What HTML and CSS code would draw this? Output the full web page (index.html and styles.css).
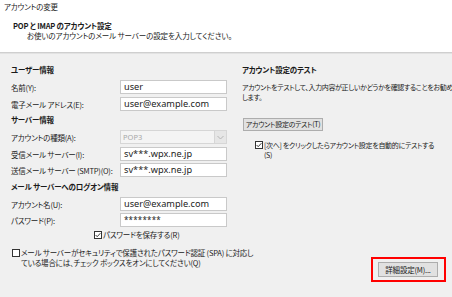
FILE: index.html
```html
<!DOCTYPE html>
<html lang="ja">
<head>
<meta charset="utf-8">
<title>アカウントの変更</title>
<link rel="stylesheet" href="styles.css">
</head>
<body>
<div class="dialog">
  <header class="header">
    <div class="win-title">アカウントの変更</div>
    <div class="head-title">POP と IMAP のアカウント設定</div>
    <div class="head-sub">お使いのアカウントのメール サーバーの設定を入力してください。</div>
  </header>
  <main class="main">
    <section class="left">
      <div class="sec-title first">ユーザー情報</div>
      <div class="row gap4"><span class="label">名前(Y):</span><span class="field">user</span></div>
      <div class="row gap3"><span class="label">電子メール アドレス(E):</span><span class="field">user@example.com</span></div>
      <div class="sec-title gap3">サーバー情報</div>
      <div class="row gap4"><span class="label">アカウントの種類(A):</span>
        <span class="select"><span class="select-val">POP3</span><span class="select-btn"><svg width="7" height="5" viewBox="0 0 7 5"><path d="M0.5 1 L3.5 4 L6.5 1" fill="none" stroke="#b5b5b5" stroke-width="1"/></svg></span></span></div>
      <div class="row gap3"><span class="label">受信メール サーバー(I):</span><span class="field">sv***.wpx.ne.jp</span></div>
      <div class="row gap2"><span class="label">送信メール サーバー (SMTP)(O):</span><span class="field">sv***.wpx.ne.jp</span></div>
      <div class="sec-title gap4">メール サーバーへのログオン情報</div>
      <div class="row gap4"><span class="label">アカウント名(U):</span><span class="field">user@example.com</span></div>
      <div class="row gap2"><span class="label">パスワード(P):</span><span class="field pw">********</span></div>
      <div class="check-row save"><span class="cb"><svg width="8" height="8" viewBox="0 0 8 8"><rect x="0.5" y="0.5" width="7" height="7" fill="#fff" stroke="#333"/><path d="M1.6 4 L3.2 5.7 L6.4 2.2" fill="none" stroke="#222" stroke-width="0.9"/></svg></span><span>パスワードを保存する(R)</span></div>
      <div class="check-row spa"><span class="cb"><svg width="8" height="8" viewBox="0 0 8 8"><rect x="0.5" y="0.5" width="7" height="7" fill="#fff" stroke="#333"/></svg></span><span class="spa-text">メール サーバーがセキュリティで保護されたパスワード認証 (SPA) に対応し<br>ている場合には、チェック ボックスをオンにしてください(Q)</span></div>
    </section>
    <section class="right">
      <div class="sec-title first">アカウント設定のテスト</div>
      <p class="desc">アカウントをテストして、入力内容が正しいかどうかを確認することをお勧め<br>します。</p>
      <button class="btn test-btn">アカウント設定のテスト(T)</button>
      <div class="check-row auto"><span class="cb"><svg width="8" height="8" viewBox="0 0 8 8"><rect x="0.5" y="0.5" width="7" height="7" fill="#fff" stroke="#333"/><path d="M1.6 4 L3.2 5.7 L6.4 2.2" fill="none" stroke="#222" stroke-width="0.9"/></svg></span><span class="auto-text">[次へ] をクリックしたらアカウント設定を自動的にテストする<br>(S)</span></div>
      <div class="highlight"><button class="btn more-btn">詳細設定(M)...</button></div>
    </section>
  </main>
</div>
</body>
</html>
```
FILE: styles.css
```css
* { box-sizing: border-box; }
html, body { margin: 0; padding: 0; }
body {
  width: 452px;
  height: 297px;
  overflow: hidden;
  background: #f0f0f0;
  font-family: "Noto Sans CJK JP", "Noto Sans", sans-serif;
  font-size: 7.5px;
  letter-spacing: -0.2px;
  font-feature-settings: "palt";
  color: #1a1a1a;
}
.dialog { width: 452px; height: 297px; display: flex; flex-direction: column; }
.header {
  height: 53px;
  flex: none;
  background: #fff;
  border-bottom: 1px solid #cfcfcf;
  box-shadow: 0 1px 0 #e2e2e2;
  padding: 2px 0 0 4px;
}
.win-title { line-height: 10px; height: 10px; }
.head-title { font-weight: bold; line-height: 10px; margin: 9px 0 0 9px; }
.head-sub { line-height: 10px; margin: 0 0 0 23px; letter-spacing: -0.1px; }
.main { flex: 1; display: flex; min-height: 0; }
.left { width: 231px; flex: none; padding-left: 11px; display: flex; flex-direction: column; }
.right { width: 221px; flex: none; min-width: 0; overflow: hidden; padding-left: 11px; display: flex; flex-direction: column; }
.sec-title { font-weight: bold; height: 12px; line-height: 12px; white-space: nowrap; }
.sec-title.first { margin-top: 11px; }
.gap2 { margin-top: 2px; }
.gap3 { margin-top: 3px; }
.gap4 { margin-top: 4px; }
.row { display: flex; align-items: center; height: 14px; }
.label { width: 109px; flex: none; white-space: nowrap; }
.field {
  width: 107px;
  height: 14px;
  flex: none;
  background: #fff;
  border: 1px solid #c9c9c9;
  font-family: "Noto Sans", "Open Sans", sans-serif;
  font-size: 9.2px;
  letter-spacing: 0;
  line-height: 12px;
  padding-left: 3px;
  color: #222;
  white-space: nowrap;
}
.field.pw { font-size: 8px; letter-spacing: 0.2px; }
.select {
  width: 107px;
  height: 14px;
  flex: none;
  display: flex;
  border: 1px solid #d6d6d6;
  background: #f4f4f4;
}
.select-val {
  flex: 1;
  font-family: "Noto Sans", sans-serif;
  font-size: 7.5px;
  letter-spacing: 0;
  line-height: 12px;
  padding-left: 2px;
  color: #a8a8a8;
}
.select-btn {
  width: 12px;
  display: flex;
  align-items: center;
  justify-content: center;
  background: #e6e6e6;
  border-left: 1px solid #d6d6d6;
}
.check-row { display: flex; align-items: flex-start; line-height: 10px; white-space: nowrap; }
.cb { width: 8px; height: 8px; flex: none; margin: 1px 0 0 0; display: flex; }
.check-row > span:last-child { margin-left: 1px; }
.save { margin-top: 3px; padding-left: 83px; }
.spa { margin-top: 8px; padding-left: 1px; }
.desc { margin: 6px 0 0 0; line-height: 10px; white-space: nowrap; font-size: 7px; letter-spacing: -0.35px; }
.btn {
  font-family: inherit;
  font-size: 7.5px;
  letter-spacing: -0.2px;
  font-feature-settings: "palt";
  color: #1a1a1a;
  background: #e1e1e1;
  border: 1px solid #adadad;
  padding: 0;
  line-height: 11px;
  white-space: nowrap;
}
.test-btn { width: 80px; height: 13px; margin: 16px 0 0 1px; align-self: flex-start; font-size: 7px; letter-spacing: -0.3px; }
.auto { margin-top: 9px; padding-left: 13px; }
.auto-text { font-size: 7px; letter-spacing: -0.3px; }
.highlight {
  margin-top: auto;
  margin-bottom: 15px;
  margin-right: 6px;
  align-self: flex-end;
  border: 2px solid #ff0000;
  padding: 3px 6px 3px 5px;
  display: flex;
}
.more-btn { width: 60px; height: 15px; }
```
